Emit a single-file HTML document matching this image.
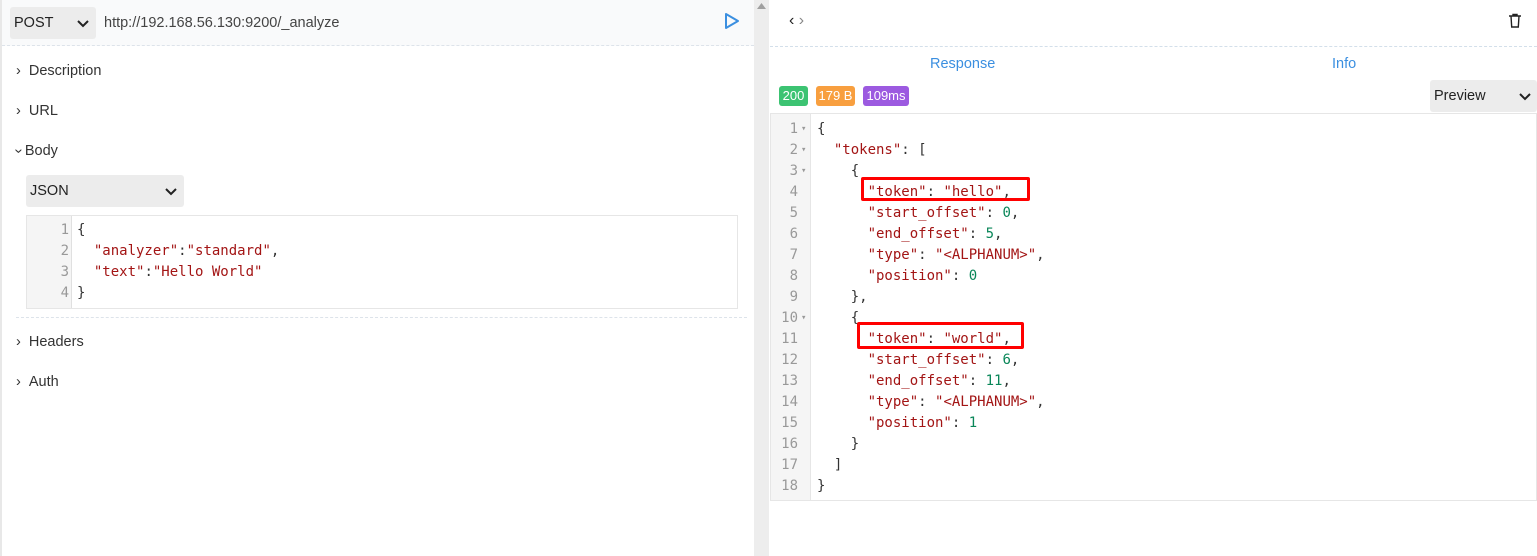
<!DOCTYPE html>
<html><head><meta charset="utf-8"><style>
*{box-sizing:border-box;margin:0;padding:0}
body{width:1537px;height:556px;overflow:hidden;background:#fff;font-family:"Liberation Sans",sans-serif;position:relative;color:#333}
.abs{position:absolute}
.mono{font-family:"DejaVu Sans Mono","Liberation Mono",monospace;font-size:14px;line-height:21px;white-space:pre}
.s{color:#a31515}.n{color:#098658}
.ln{color:#999;text-align:right}
.sect{position:absolute;left:16px;font-size:14.5px;color:#333}
.sel{position:absolute;background:#ececec;border-radius:3px;font-size:14.5px;color:#222}
</style></head><body>
<div class="abs" style="left:0;top:0;width:2px;height:556px;background:#e8e8e8"></div>
<div class="abs" style="left:2px;top:0;width:752px;height:46px;background:#f9fafb;border-bottom:1px dashed #dde3ea"></div>
<div class="sel" style="left:10px;top:7px;width:86px;height:32px;padding:8px 4px">POST
<svg class="abs" style="left:66px;top:12px" width="14" height="9" viewBox="0 0 14 9"><path d="M2 2l5 5 5-5" fill="none" stroke="#222" stroke-width="2"/></svg></div>
<div class="abs" style="left:104px;top:15px;font-size:14.5px;color:#444">http://192.168.56.130:9200/_analyze</div>
<svg class="abs" style="left:724px;top:12px" width="16" height="18" viewBox="0 0 16 18"><path d="M2 2v14l12-7z" fill="none" stroke="#3b8fe0" stroke-width="2" stroke-linejoin="round"/></svg>
<div class="sect" style="top:63px">›&nbsp;&nbsp;Description</div>
<div class="sect" style="top:103px">›&nbsp;&nbsp;URL</div>
<div class="sect" style="top:143px"><span style="display:inline-block;transform:rotate(90deg)">›</span>&nbsp;Body</div>
<div class="sel" style="left:26px;top:175px;width:158px;height:32px;padding:8px 4px">JSON
<svg class="abs" style="left:138px;top:12px" width="14" height="9" viewBox="0 0 14 9"><path d="M2 2l5 5 5-5" fill="none" stroke="#222" stroke-width="2"/></svg></div>
<div class="abs" style="left:26px;top:215px;width:712px;height:94px;border:1px solid #e6e6e6"></div>
<div class="abs" style="left:27px;top:216px;width:45px;height:92px;background:#f5f5f5;border-right:1px solid #e0e0e0"></div>
<div class="abs mono ln" style="left:27px;top:220px;width:42px">1
2
3
4</div>
<div class="abs mono" style="left:77px;top:220px">{
  <span class="s">"analyzer"</span>:<span class="s">"standard"</span>,
  <span class="s">"text"</span>:<span class="s">"Hello World"</span>
}</div>
<div class="abs" style="left:16px;top:317px;width:731px;border-top:1px dashed #dde3ea"></div>
<div class="sect" style="top:334px">›&nbsp;&nbsp;Headers</div>
<div class="sect" style="top:374px">›&nbsp;&nbsp;Auth</div>
<div class="abs" style="left:754px;top:0;width:15px;height:556px;background:#ededed"></div>
<svg class="abs" style="left:757px;top:3px" width="9" height="6"><path d="M0 6L4.5 0 9 6z" fill="#a0a0a0"/></svg>
<div class="abs" style="left:789px;top:12px;font-size:16px;color:#222">‹&nbsp;<span style="color:#888">›</span></div>
<svg class="abs" style="left:1508px;top:13px" width="14" height="16" viewBox="0 0 14 16"><path d="M1 3h12M5 3V1.5h4V3M3 3l.7 11h6.6L11 3" fill="none" stroke="#222" stroke-width="1.4"/></svg>
<div class="abs" style="left:770px;top:46px;width:767px;border-top:1px dashed #d3dfea"></div>
<div class="abs" style="left:930px;top:56px;font-size:14.5px;color:#3b8fe0">Response</div>
<div class="abs" style="left:1332px;top:56px;font-size:14.5px;color:#3b8fe0">Info</div>
<div class="abs" style="left:779px;top:86px;width:29px;height:20px;background:#3cc372;color:#fff;font-size:13px;border-radius:3px;text-align:center;line-height:20px">200</div>
<div class="abs" style="left:816px;top:86px;width:39px;height:20px;background:#f89f3f;color:#fff;font-size:13px;border-radius:3px;text-align:center;line-height:20px">179 B</div>
<div class="abs" style="left:863px;top:86px;width:46px;height:20px;background:#9c5ae0;color:#fff;font-size:13px;border-radius:3px;text-align:center;line-height:20px">109ms</div>
<div class="sel" style="left:1430px;top:80px;width:107px;height:32px;padding:8px 4px">Preview
<svg class="abs" style="left:88px;top:12px" width="14" height="9" viewBox="0 0 14 9"><path d="M2 2l5 5 5-5" fill="none" stroke="#222" stroke-width="2"/></svg></div>
<div class="abs" style="left:770px;top:113px;width:767px;height:388px;border:1px solid #e6e6e6"></div>
<div class="abs" style="left:771px;top:114px;width:40px;height:386px;background:#f5f5f5;border-right:1px solid #e6e6e6"></div>
<div class="abs mono ln" style="left:771px;top:119px;width:27px">1
2
3
4
5
6
7
8
9
10
11
12
13
14
15
16
17
18</div>
<div class="abs mono" style="left:801px;top:119px;font-size:9px;color:#999;line-height:21px">▾
▾
▾






▾</div>
<div class="abs mono" style="left:817px;top:119px">{
  <span class="s">"tokens"</span>: [
    {
      <span class="s">"token"</span>: <span class="s">"hello"</span>,
      <span class="s">"start_offset"</span>: <span class="n">0</span>,
      <span class="s">"end_offset"</span>: <span class="n">5</span>,
      <span class="s">"type"</span>: <span class="s">"&lt;ALPHANUM&gt;"</span>,
      <span class="s">"position"</span>: <span class="n">0</span>
    },
    {
      <span class="s">"token"</span>: <span class="s">"world"</span>,
      <span class="s">"start_offset"</span>: <span class="n">6</span>,
      <span class="s">"end_offset"</span>: <span class="n">11</span>,
      <span class="s">"type"</span>: <span class="s">"&lt;ALPHANUM&gt;"</span>,
      <span class="s">"position"</span>: <span class="n">1</span>
    }
  ]
}</div>
<div class="abs" style="left:861px;top:177px;width:169px;height:24px;border:3px solid #f00;border-radius:2px"></div>
<div class="abs" style="left:857px;top:322px;width:167px;height:27px;border:3px solid #f00;border-radius:2px"></div>
</body></html>
